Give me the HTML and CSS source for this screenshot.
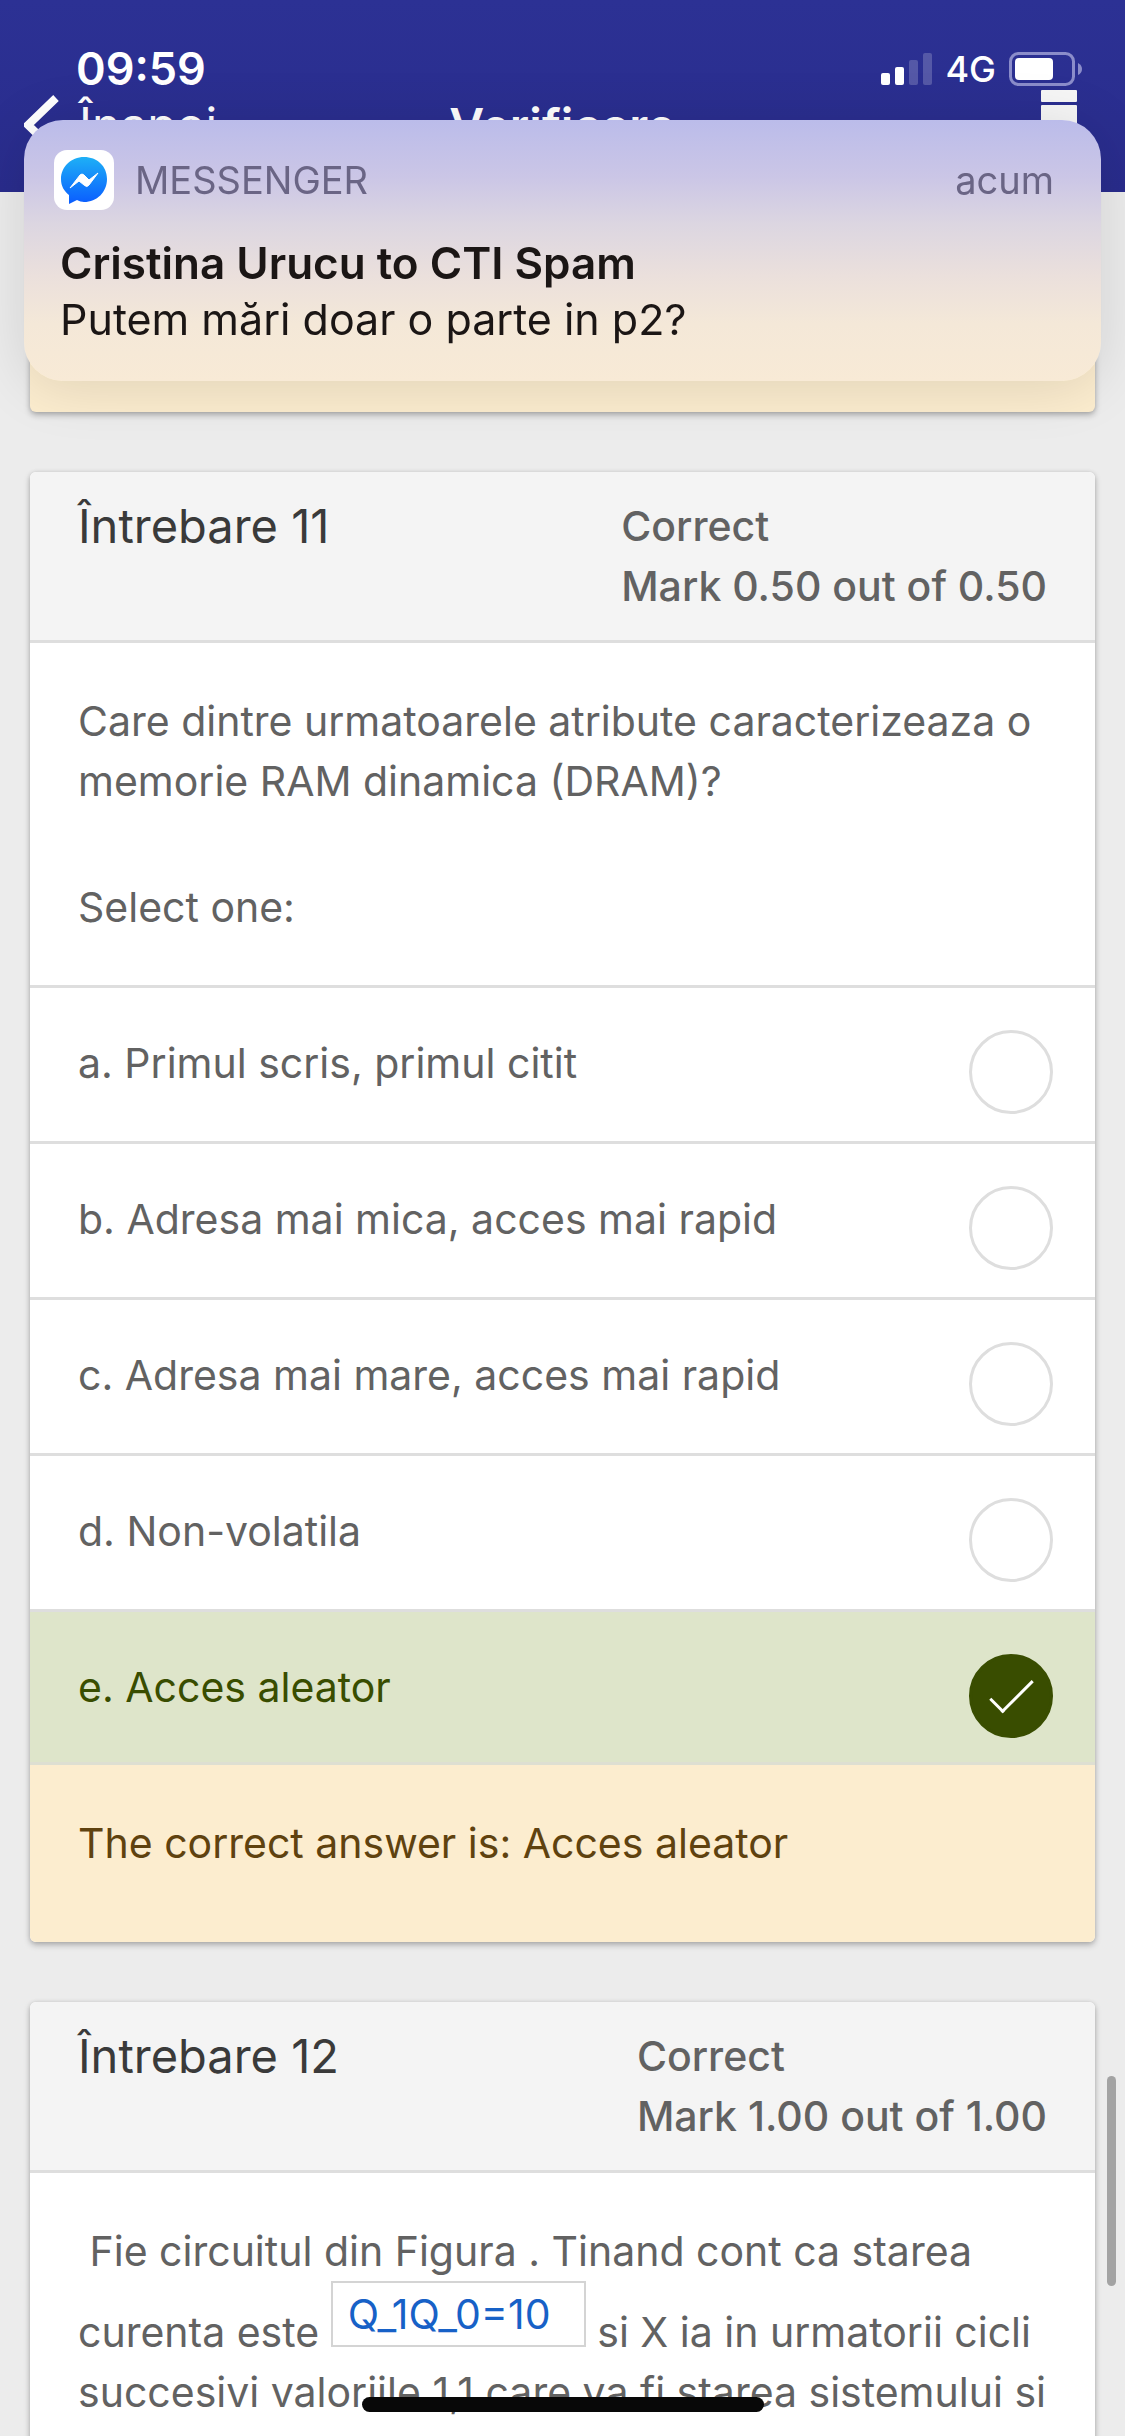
FILE: index.html
```html
<!DOCTYPE html>
<html lang="ro">
<head>
<meta charset="utf-8">
<meta name="viewport" content="width=device-width, initial-scale=1">
<title>Verificare</title>
<link rel="stylesheet" href="styles.css">
</head>
<body>
<div class="app">
  <header class="app-header">
    <div class="status-bar">
      <time class="clock">09:59</time>
      <div class="status-icons">
        <svg width="51" height="32" viewBox="0 0 51 32" aria-hidden="true">
          <g fill="#fff">
            <rect x="0" y="20" width="9" height="12" rx="2"/>
            <rect x="14" y="14" width="9" height="18" rx="2"/>
            <rect x="28" y="7" width="9" height="25" rx="2" opacity=".2"/>
            <rect x="42" y="0" width="9" height="32" rx="2" opacity=".2"/>
          </g>
        </svg>
        <span class="network">4G</span>
        <svg width="74" height="34" viewBox="0 0 74 34" aria-hidden="true">
          <rect x="1.5" y="1.5" width="63" height="31" rx="8" fill="none" stroke="#8b8dca" stroke-width="3"/>
          <rect x="6" y="6" width="38" height="22" rx="4" fill="#fff"/>
          <path d="M69 11q4 2 4 6t-4 6z" fill="#8b8dca"/>
        </svg>
      </div>
    </div>
    <nav class="nav-bar">
      <a class="back" href="#">
        <svg width="35" height="60" viewBox="0 0 35 60" aria-hidden="true">
          <path d="M32 3 4 30l28 27" fill="none" stroke="#fff" stroke-width="8"/>
        </svg>
        <span>Înapoi</span>
      </a>
      <h1 class="page-title">Verificare</h1>
      <button class="menu" type="button" aria-label="Meniu">
        <svg width="36" height="66" viewBox="0 0 36 66" aria-hidden="true">
          <rect width="36" height="12" rx="1" fill="#f6f6f6"/>
          <rect y="15" width="36" height="51" rx="1" fill="#f6f6f6"/>
        </svg>
      </button>
    </nav>
  </header>

  <main class="quiz">
    <article class="card card-previous"></article>

    <article class="card">
      <header class="card-header">
        <h2 class="card-title">Întrebare 11</h2>
        <p class="mark">Correct<br>Mark 0.50 out of 0.50</p>
      </header>
      <div class="question">
        <p>Care dintre urmatoarele atribute caracterizeaza o memorie RAM dinamica (DRAM)?</p>
        <p>Select one:</p>
      </div>
      <label class="option"><span>a. Primul scris, primul citit</span><input class="radio" type="radio" name="q11"></label>
      <label class="option"><span>b. Adresa mai mica, acces mai rapid</span><input class="radio" type="radio" name="q11"></label>
      <label class="option"><span>c. Adresa mai mare, acces mai rapid</span><input class="radio" type="radio" name="q11"></label>
      <label class="option"><span>d. Non-volatila</span><input class="radio" type="radio" name="q11"></label>
      <label class="option option-correct"><span>e. Acces aleator</span><input class="radio" type="radio" name="q11" checked></label>
      <p class="feedback">The correct answer is: Acces aleator</p>
    </article>

    <article class="card">
      <header class="card-header">
        <h2 class="card-title">Întrebare 12</h2>
        <p class="mark">Correct<br>Mark 1.00 out of 1.00</p>
      </header>
      <div class="question">
        <p>&nbsp;Fie circuitul din Figura . Tinand cont ca starea curenta este <span class="field"><input class="answer" type="text" value="Q_1Q_0=10" aria-label="Starea curenta"></span> si X ia in urmatorii cicli succesivi valoriile 1,1 care va fi starea sistemului si</p>
      </div>
    </article>
  </main>
</div>

<aside class="notification">
  <div class="notification-head">
    <svg class="app-icon" width="60" height="60" viewBox="0 0 60 60" aria-hidden="true">
      <defs>
        <linearGradient id="bubble" x1="0" y1="0" x2="0" y2="1">
          <stop offset="0" stop-color="#1eb0f6"/>
          <stop offset="1" stop-color="#0a5cff"/>
        </linearGradient>
      </defs>
      <rect width="60" height="60" rx="13" fill="#fff"/>
      <path d="M30 7C17 7 7 17 7 29c0 7 3 12 8 16v9l8-4c2 1 5 2 7 2 13 0 23-10 23-23S43 7 30 7z" fill="url(#bubble)"/>
      <path d="M16 38 26 25q2-2 4 0l5 5 9-7-9 12q-2 3-5 0l-5-4z" fill="#fff" stroke="#fff" stroke-width="1" stroke-linejoin="round"/>
    </svg>
    <span class="app-name">MESSENGER</span>
    <time class="when">acum</time>
  </div>
  <p class="sender">Cristina Urucu to CTI Spam</p>
  <p class="message">Putem mări doar o parte in p2?</p>
</aside>
<div class="scroll-thumb"></div>
<div class="home-indicator"></div>
</body>
</html>
```
FILE: styles.css
```css
* {
  box-sizing: border-box;
}

body,
h1,
h2,
p {
  margin: 0;
}

body {
  background: #ececec;
  color: #626262;
  font: 400 41px/60px Inter, "Liberation Sans", sans-serif;
}

.app {
  display: flex;
  flex-direction: column;
  height: 100vh;
  overflow: hidden;
}

/* Header */
.app-header {
  flex: none;
  height: 192px;
  overflow: hidden;
  background: linear-gradient(#2c3194, #292c8c);
  color: #fff;
}

.status-bar {
  display: flex;
  align-items: center;
  justify-content: space-between;
  height: 90px;
  padding: 48px 42px 0 76px;
}

.clock {
  font-size: 45px;
  font-weight: 600;
}

.status-icons {
  display: flex;
  align-items: center;
  gap: 13px;
}

.network {
  font-size: 36px;
  font-weight: 500;
}

.nav-bar {
  display: grid;
  grid-template-columns: 1fr auto 1fr;
  align-items: start;
  padding: 0 24px;
}

.back {
  display: flex;
  align-items: center;
  gap: 20px;
  padding-top: 5px;
  color: #fff;
  font-size: 48px;
  text-decoration: none;
}

.page-title {
  padding-top: 6px;
  font-size: 48px;
  font-weight: 600;
  line-height: 60px;
}

.menu {
  display: flex;
  justify-self: end;
  padding: 0 24px 0 0;
  border: 0;
  background: none;
}

/* Question cards */
.quiz {
  display: flex;
  flex: 1;
  flex-direction: column;
  gap: 60px;
  min-height: 0;
  padding: 0 30px;
}

.card {
  flex: none;
  overflow: hidden;
  border-radius: 6px;
  background: #fff;
  box-shadow: 0 3px 6px rgba(0, 0, 0, .26), 0 0 4px rgba(0, 0, 0, .1);
}

.card-previous {
  height: 220px;
  border-radius: 0 0 6px 6px;
  background: #fcedcf;
}

.card-header {
  display: flex;
  justify-content: space-between;
  padding: 24px 48px;
  border-bottom: 3px solid #dedede;
  background: #f4f4f4;
}

.card-title {
  color: #3a3a3a;
  font-size: 47px;
  font-weight: 400;
}

.mark {
  font-weight: 500;
}

.question {
  display: grid;
  gap: 66px;
  padding: 48px;
}

.option {
  display: flex;
  align-items: flex-start;
  justify-content: space-between;
  padding: 42px 42px 27px 48px;
  border-top: 3px solid #dedede;
  line-height: 66px;
}

.radio {
  display: grid;
  place-items: center;
  width: 84px;
  height: 84px;
  margin: 0;
  border: 3px solid #dedede;
  border-radius: 50%;
  background: #fff;
  appearance: none;
}

.radio:checked {
  border-color: #394d00;
  background: #394d00;
}

.radio:checked::after {
  width: 16px;
  height: 41px;
  margin-bottom: 10px;
  border: solid #fff;
  border-width: 0 3px 3px 0;
  content: "";
  transform: rotate(45deg);
}

.option-correct {
  padding-bottom: 24px;
  border-bottom: 3px solid #dedfd2;
  background: #dee5ca;
  color: #394d00;
}

.feedback {
  padding: 48px 48px 69px;
  background: #fcedcf;
  color: #5f420f;
}

.field {
  display: inline-block;
  overflow: hidden;
}

.answer {
  display: block;
  width: 255px;
  height: 66px;
  padding: 0 15px;
  border: 2px solid #d4d4d4;
  border-radius: 0;
  background: #fff;
  color: #1761c7;
  font: inherit;
}

/* Layers over the app */
.notification {
  position: fixed;
  top: 120px;
  right: 24px;
  left: 24px;
  padding: 30px 47px 34px 36px;
  border-radius: 39px;
  background: linear-gradient(#bbbcea, #cbc6e6 22%, #dcd6e1 40%, #ebe0dc 60%, #f4e8d8 78%, #f8ead6);
  box-shadow: 0 6px 60px rgba(0, 0, 0, .12);
  color: #1b1615;
}

.notification-head {
  display: flex;
  align-items: center;
  height: 60px;
  margin-bottom: 24px;
  color: #6a6585;
  font-size: 38px;
}

.app-icon {
  margin: 0 21px 0 -6px;
}

.when {
  margin-left: auto;
}

.sender {
  font-size: 44px;
  font-weight: 600;
  line-height: 58px;
}

.message {
  font-size: 43px;
  line-height: 55px;
}

.scroll-thumb {
  position: fixed;
  top: 2076px;
  right: 9px;
  width: 9px;
  height: 210px;
  border-radius: 5px;
  background: #a3a3a3;
}

.home-indicator {
  position: fixed;
  bottom: 24px;
  left: 50%;
  width: 402px;
  height: 15px;
  border-radius: 8px;
  background: #080808;
  transform: translateX(-50%);
}
```
